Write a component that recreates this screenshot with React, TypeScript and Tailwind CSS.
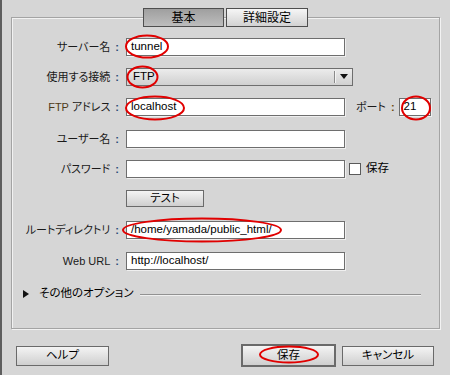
const jp = "font-['Liberation_Sans','Noto_Sans_CJK_JP',sans-serif] [font-feature-settings:'palt']";

function Label({ children }: { children: React.ReactNode }) {
  return (
    <div className="w-[110px] shrink-0 flex justify-end items-center pr-[3px] text-[11px] text-[#1a1a1a] leading-none">
      <span>{children}</span>
      <span className="ml-[5px] text-[#2b4d78] font-bold">:</span>
    </div>
  );
}

function Field({ value, w = "w-[219px]" }: { value?: string; w?: string }) {
  return (
    <div
      className={`${w} h-[18px] ml-[4px] bg-white border border-[#6e6e6e] shadow-[1px_1px_0_#efefef] flex items-center pl-[4px] text-[11.5px] text-black font-['Liberation_Sans',sans-serif] leading-none`}
    >
      {value}
    </div>
  );
}

function Btn({ children, className = "" }: { children: React.ReactNode; className?: string }) {
  return (
    <div
      className={`flex items-center justify-center bg-gradient-to-b from-[#f4f4f4] to-[#cfcfcf] border border-[#6a6a6a] text-[11.5px] text-black leading-none ${className}`}
    >
      {children}
    </div>
  );
}

export default function App() {
  return (
    <div className={`relative w-[450px] h-[375px] bg-[#d6d6d6] border-l-2 border-[#5e5e5e] overflow-hidden flex flex-col ${jp}`}>
      {/* tabs */}
      <div className="flex pt-[8px] pl-[141px] gap-[2px] relative z-10">
        <div className="w-[81px] h-[19px] flex items-center justify-center bg-gradient-to-b from-[#9f9f9f] to-[#bdbdbd] border border-[#4e4e4e] text-[12px] leading-none text-black">
          基本
        </div>
        <div className="w-[82px] h-[19px] flex items-center justify-center bg-gradient-to-b from-[#f6f6f6] to-[#d2d2d2] border border-[#4e4e4e] text-[12px] leading-none text-black">
          詳細設定
        </div>
      </div>

      {/* panel */}
      <div className="ml-[9px] mt-[-10px] w-[429px] h-[312px] border border-[#a4a4a4] shadow-[inset_1px_1px_0_#f2f2f2,1px_1px_0_#f2f2f2] pt-[20px] flex flex-col">
        <div className="flex items-center h-[18px]">
          <Label>サーバー名</Label>
          <Field value="tunnel" />
        </div>

        <div className="flex items-center h-[18px] mt-[12px]">
          <Label>使用する接続</Label>
          <div className="w-[227px] h-[18px] ml-[4px] bg-gradient-to-b from-[#ececec] to-[#d0d0d0] border border-[#6e6e6e] flex items-center text-[11.5px] font-['Liberation_Sans',sans-serif] leading-none">
            <span className="pl-[6px] flex-1">FTP</span>
            <div className="w-px h-[12px] bg-[#8a8a8a] shadow-[1px_0_0_#f4f4f4]" />
            <div className="w-[17px] flex justify-center">
              <svg width="8" height="6" viewBox="0 0 8 6">
                <polygon points="0,0 8,0 4,5" fill="#111" />
              </svg>
            </div>
          </div>
        </div>

        <div className="flex items-center h-[18px] mt-[12px]">
          <Label>
            <span className="text-[#4e3a18]">FTP</span> アドレス
          </Label>
          <Field value="localhost" />
          <div className="ml-[11px] flex items-center text-[11px] leading-none text-[#1a1a1a]">
            <span>ポート</span>
            <span className="ml-[5px] text-[#6b4a10] font-bold">:</span>
          </div>
          <Field value="21" w="w-[32px]" />
        </div>

        <div className="flex items-center h-[18px] mt-[14px]">
          <Label>ユーザー名</Label>
          <Field />
        </div>

        <div className="flex items-center h-[18px] mt-[12px]">
          <Label>パスワード</Label>
          <Field />
          <div className="ml-[4px] w-[12px] h-[12px] bg-white border border-[#5a5a5a]" />
          <span className="ml-[5px] text-[11.5px] leading-none text-black">保存</span>
        </div>

        <div className="flex items-center h-[17px] mt-[12px] pl-[114px]">
          <Btn className="w-[78px] h-[17px]">テスト</Btn>
        </div>

        <div className="flex items-center h-[18px] mt-[14px]">
          <Label>ルートディレクトリ</Label>
          <Field value="/home/yamada/public_html/" />
        </div>

        <div className="flex items-center h-[18px] mt-[13px]">
          <Label>Web URL</Label>
          <Field value="http://localhost/" />
        </div>

        <div className="flex items-center h-[14px] mt-[17px] pl-[11px] pr-[18px]">
          <svg width="6" height="8" viewBox="0 0 6 8">
            <polygon points="0,0 6,4 0,8" fill="#111" />
          </svg>
          <span className="ml-[10px] text-[11.5px] leading-none text-black">その他のオプション</span>
          <div className="ml-[6px] flex-1 h-px bg-[#929292] shadow-[0_1px_0_#f0f0f0]" />
        </div>
      </div>

      {/* bottom buttons */}
      <div className="flex items-center h-[23px] mt-[15px] pl-[14px] pr-[16px]">
        <Btn className="w-[93px] h-[20px]">ヘルプ</Btn>
        <Btn className="ml-auto w-[95px] h-[23px] border-2 border-[#4a4a4a]">保存</Btn>
        <Btn className="ml-[6px] w-[92px] h-[20px]">キャンセル</Btn>
      </div>

      {/* red annotation ellipses */}
      <svg className="absolute left-0 top-0 pointer-events-none" width="450" height="375" viewBox="0 0 450 375">
        <g fill="none" stroke="#e10000" strokeWidth="2">
          <ellipse cx="145" cy="46.5" rx="21" ry="11" />
          <ellipse cx="140.5" cy="77" rx="15" ry="10.5" />
          <ellipse cx="153" cy="108" rx="29" ry="11.5" />
          <ellipse cx="414" cy="108" rx="14" ry="11.5" />
          <ellipse cx="200" cy="230" rx="79" ry="11.5" />
          <ellipse cx="287" cy="354.5" rx="29" ry="8" />
        </g>
      </svg>
    </div>
  );
}
